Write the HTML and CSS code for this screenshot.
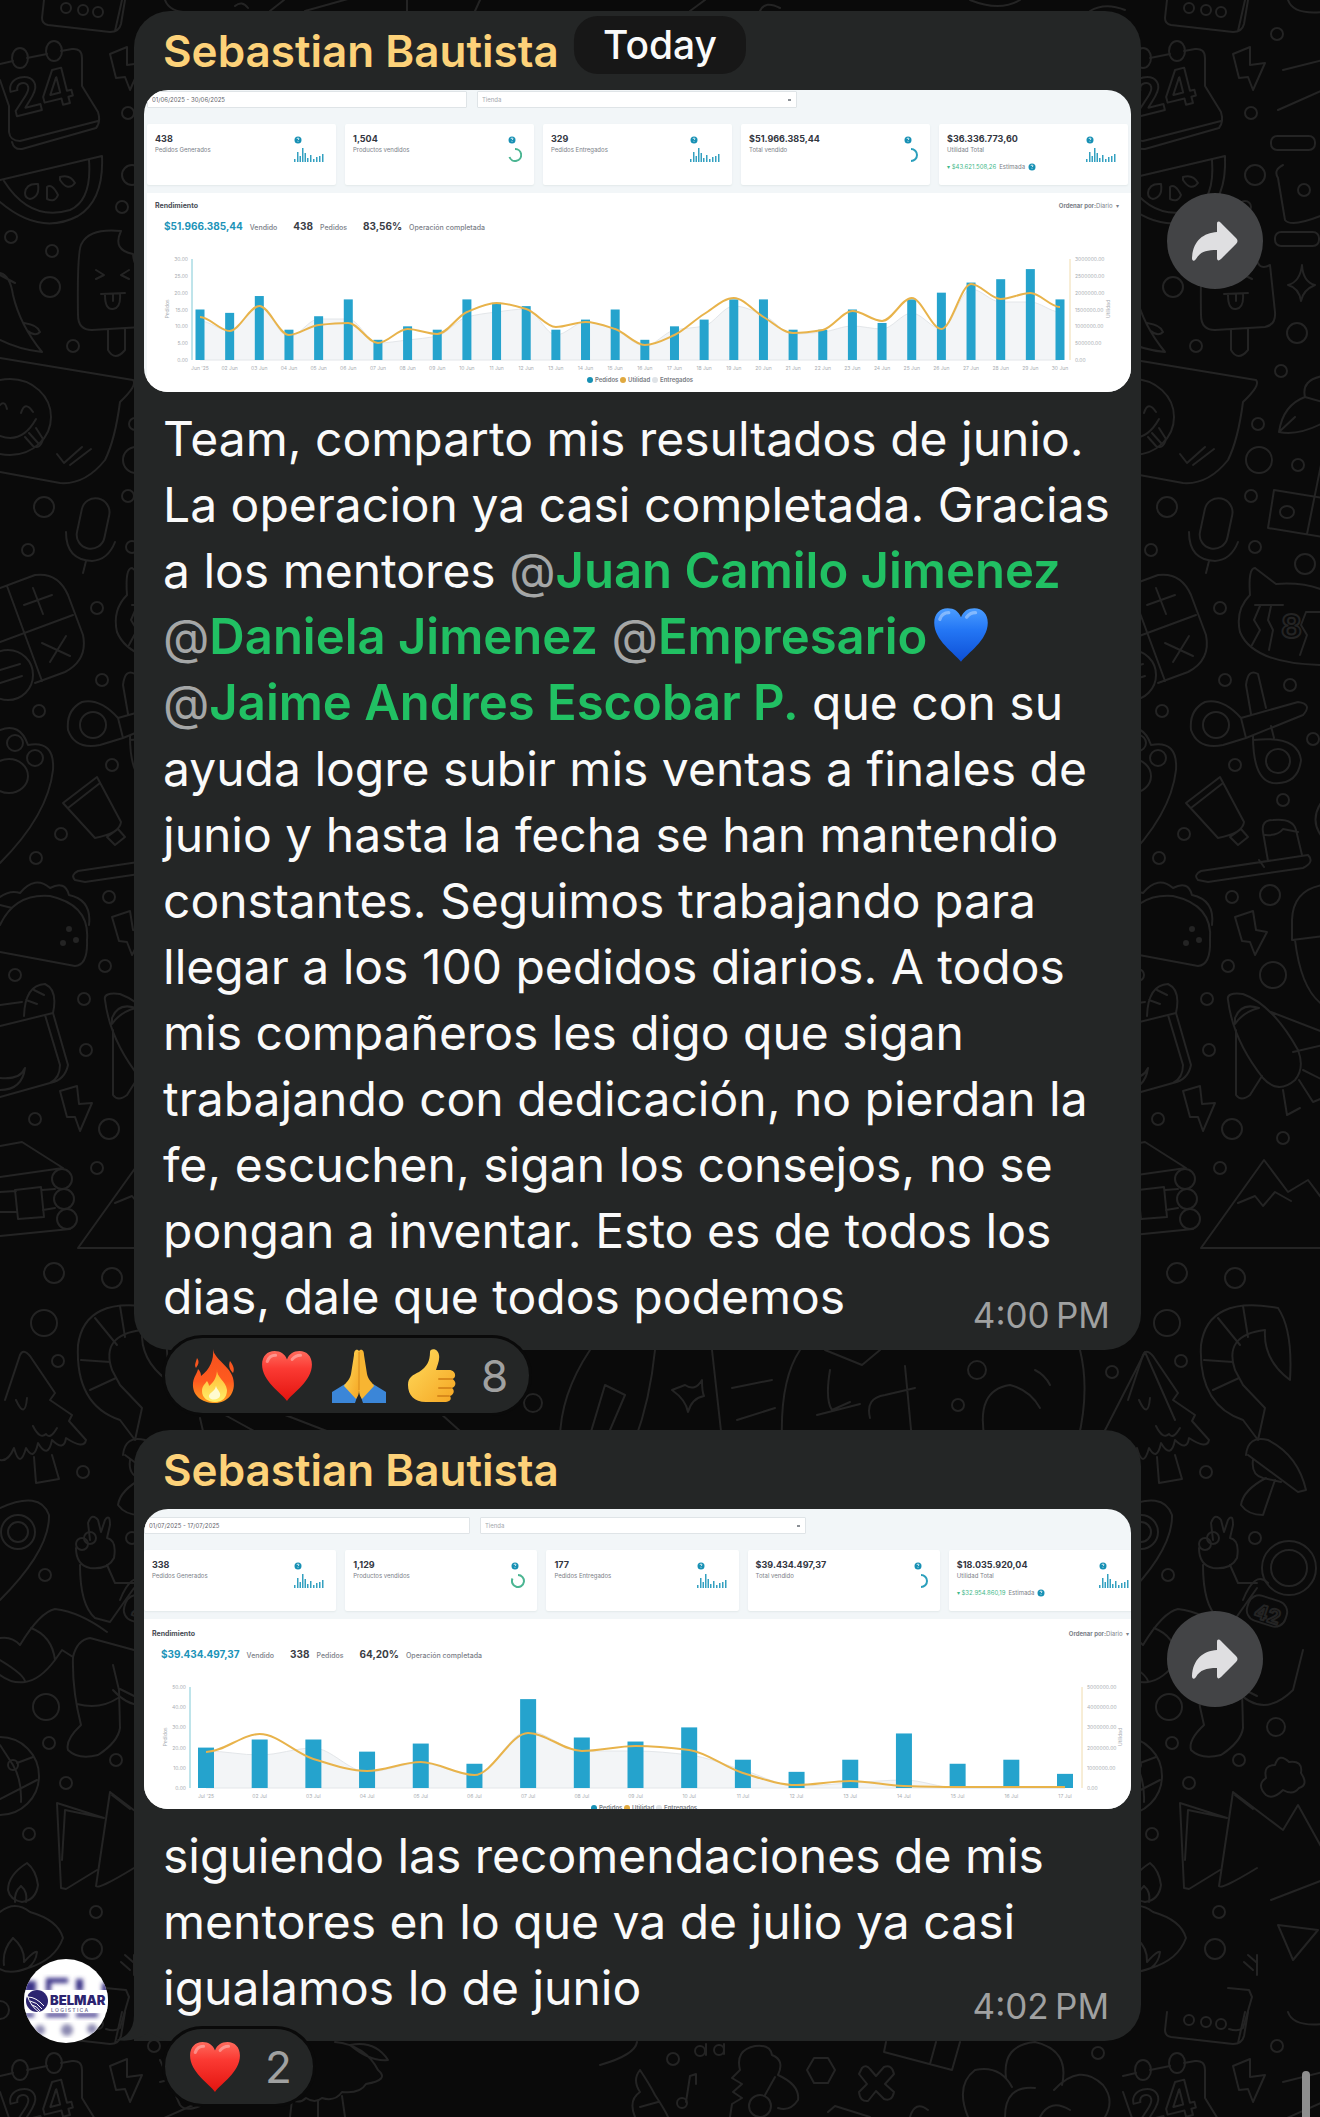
FILE: index.html
```html
<!DOCTYPE html>
<html lang="es">

<head>
<title>Chat</title>
<meta charset="utf-8" />
<meta name="viewport" content="width=device-width, initial-scale=1.0">
<link rel="stylesheet" href="styles.css">
</head>

<body>

<!-- shared drawings -->
<svg class="defs" width="0" height="0" aria-hidden="true">
  <defs>
    <linearGradient id="redFill" x1="0" y1="0" x2="0" y2="1"><stop offset="0" stop-color="#ff6a5c"/><stop offset=".35" stop-color="#fb3a33"/><stop offset="1" stop-color="#e3140f"/></linearGradient>
    <linearGradient id="blueFill" x1="0" y1="0" x2="0" y2="1"><stop offset="0" stop-color="#4b9dff"/><stop offset=".4" stop-color="#2477f5"/><stop offset="1" stop-color="#0d4fd6"/></linearGradient>
    <linearGradient id="fireFill" x1="0" y1="0" x2="0" y2="1"><stop offset="0" stop-color="#f4511e"/><stop offset=".6" stop-color="#ff5a1f"/><stop offset="1" stop-color="#ff9d1e"/></linearGradient>
    <linearGradient id="flameFill" x1="0" y1="0" x2="0" y2="1"><stop offset="0" stop-color="#ffb52e"/><stop offset="1" stop-color="#fff06a"/></linearGradient>
    <linearGradient id="skinFill" x1="0" y1="0" x2="1" y2="1"><stop offset="0" stop-color="#ffdc5e"/><stop offset="1" stop-color="#f5a623"/></linearGradient>
    <filter id="soft"><feGaussianBlur stdDeviation="2"/></filter>

    <symbol id="heart" viewBox="0 0 52 52"><path d="M26 50C20 42 2 31 2 15 2 7 7 2 14 2c6 0 10 3 12 8C28 5 32 2 38 2c7 0 12 5 12 13 0 16-18 27-24 35z"/><path d="M7 12q2-6 8-6M31 10q3-4 8-4" fill="none" stroke="#fff" stroke-opacity=".35" stroke-width="3" stroke-linecap="round"/></symbol>
    <symbol id="forward" viewBox="0 0 46 40"><path d="M25 3c0-3 2-3 4-1l15 15c2 2 2 4 0 6L29 38c-2 2-4 2-4-1v-8c-11 0-17 2-21 9-2 3-4 2-4-1C1 20 11 12 25 11z"/></symbol>
    <symbol id="minibars" viewBox="0 0 30 14"><path d="M0 11h1.5v3H0zM3 4h1.500v10H3zM5.500 8h1.500v6H5.500zM8 0h1.500v14H8zM10.500 5h1.500v9h-1.500zM13 10h1.500v4H13zM16 7h1.500v7H16zM19 11h1.500v3H19zM22 9h1.500v5H22zM25 8h1.500v6H25zM28 6h1.500v8H28z"/></symbol>
    <symbol id="info" viewBox="0 0 8 8"><circle cx="4" cy="4" r="3.500"/><path d="M3 3q0-1 1-1t1 1l-1 1.200M4 5.200v.7" fill="none" stroke="#fff" stroke-width=".8"/></symbol>

    <g id="doodles">
      <path d="M44 0L42 18Q42 24 48 25L110 32Q119 32 121 24L125 0M115 31L122 0"/>
      <circle cx="66" cy="8" r="5"/><circle cx="83" cy="10" r="5"/><circle cx="98" cy="12" r="5"/>
      <path d="M0 64L13 61M27 58L47 54M61 51L72 49Q82 48 82 58V86L98 112Q101 122 96 128L22 149Q14 150 12 142M0 80L9 106V132Q10 141 20 141L98 121"/>
      <ellipse cx="20" cy="58" rx="8" ry="10"/><ellipse cx="54" cy="51" rx="8" ry="10"/>
      <text x="14" y="117" transform="rotate(-14 14 117)" font-size="50">24</text>
      <path d="M110 54L127 47V65L142 63L130 90L125 77L116 78Z"/>
      <path d="M0 180L102 156Q104 200 78 216Q40 236 0 202M4 181Q30 222 70 210Q92 200 89 160"/>
      <path d="M25 193Q26 183 38 184Q40 197 30 199Q25 198 25 193ZM47 187Q52 183 58 195Q55 203 47 199ZM60 177Q70 174 75 183Q68 192 60 180Z"/>
      <path d="M121 231Q90 228 82 243Q77 248 78 315Q78 330 92 330L142 327Q153 325 152 312L147 265M121 231Q112 250 133 254Q134 272 147 265M108 330V350Q115 362 125 350V329M96 270L104 275L96 279M129 270L121 275L129 279M101 294L125 293M105 295Q105 310 113 309Q121 308 120 294M113 294V301"/>
      <path d="M0 273Q10 275 13 295Q20 325 42 352Q20 350 0 340M0 275L15 283M24 323Q38 325 40 332Q35 337 28 331"/>
      <path d="M0 358L133 380Q138 385 120 402Q115 440 105 460Q85 485 60 483L0 472"/>
      <ellipse cx="10" cy="417" rx="41" ry="38"/>
      <path d="M21 413Q25 400 33 412M0 405Q5 400 7 409M0 436Q22 444 36 419M25 437L33 446Q40 450 43 439L36 428M29 433L38 443"/>
      <path d="M57 454L64 463L82 447M70 465L91 449"/>
      <rect x="79" y="498" width="28" height="51" rx="14" transform="rotate(12 93 524)"/>
      <path d="M66 532Q66 560 92 561Q108 560 115 542M86 561L83 573"/>
      <path d="M0 588L35 575Q58 572 68 595L83 635Q88 660 65 672L35 683M7 586L42 681M0 642L73 615M24 605L52 595M33 588L43 614M42 643L70 656M66 636L50 662"/>
      <circle cx="8" cy="675" r="25"/><path d="M0 670L20 664M0 683L22 676"/>
      <path d="M156 432Q160 405 182 397L200 402M156 432Q175 436 200 423M156 432L172 417M182 397Q178 380 200 376"/>
      <path d="M200 498L151 490L145 528L200 537M200 455L184 534"/><ellipse cx="164" cy="512" rx="7" ry="6"/>
      <path d="M132 568L153 584Q180 582 200 590M132 568Q125 568 127 595Q112 610 117 632Q130 664 200 665M132 605H160M137 606L131 620L137 630L129 645M148 606L145 620L150 630L146 650M183 612L178 625L184 635L177 655M183 612H200"/>
      <text x="158" y="638" font-size="32">8</text>
      <path d="M118 718Q100 698 82 702Q66 710 68 730Q75 750 100 745L123 738ZM118 718L175 702Q190 704 180 715L123 738M128 714L123 685Q125 668 135 674L143 708M130 736Q130 780 150 783Q175 785 178 760Q175 735 130 740M148 726L151 738"/>
      <circle cx="93" cy="725" r="13"/><circle cx="155" cy="761" r="12"/>
      <path d="M0 730Q20 722 28 745Q55 740 53 770Q48 815 0 863"/><circle cx="15" cy="743" r="8"/><circle cx="35" cy="758" r="8"/><ellipse cx="9" cy="776" rx="19" ry="17"/>
      <path d="M63 803L97 777L121 822Q120 833 95 838ZM68 808L100 783M107 837L118 829L125 837L115 845Z"/>
      <path d="M78 871Q70 875 75 880L85 882L180 868Q192 862 185 855ZM136 860L141 867M145 861L140 832Q138 820 150 820Q170 818 173 830L179 855M142 835Q155 836 160 829L175 832"/>
      <path d="M0 925Q15 893 50 896Q90 905 87 940Q88 965 75 966L0 952M0 897Q10 890 20 893Q35 875 50 888Q65 880 69 895Q92 900 89 925M0 905L12 908"/>
      <g class="dots"><circle cx="69" cy="929" r="2"/><circle cx="63" cy="943" r="2"/><circle cx="76" cy="940" r="2"/></g>
      <path d="M112 917L130 911L133 930L144 932L132 955L127 942L119 941Z"/>
      <path d="M200 885Q170 890 169 920V940L200 936M172 940Q178 990 200 1005M200 800Q185 820 200 838"/>
      <path d="M0 1026L53 1013L68 1065Q65 1080 50 1083L0 1097M45 1015L60 1065Q60 1078 50 1083M24 1016Q25 985 45 984Q58 990 53 1013M26 1000L37 1004M34 990L44 995M0 1005L22 1002M0 1078Q20 1080 25 1068Q22 1090 0 1090"/>
      <path d="M60 1091L77 1086L79 1104L92 1103L80 1131L75 1117L67 1117Z"/>
      <path d="M105 1000Q103 992 120 994Q150 1005 175 1050Q182 1068 172 1080Q155 1095 140 1078Q110 1040 105 1000ZM112 1018Q118 1002 136 1008Q120 1012 112 1024ZM113 1030V1095Q118 1102 127 1095L139 1076M148 1012L200 1032M170 1052L200 1045M160 1090L164 1115L177 1108M176 1080L190 1102L200 1098M180 1070L200 1080"/>
      <path d="M0 1146L22 1142L63 1168L0 1177M0 1192L16 1191M42 1190L55 1189M0 1212H16M43 1210L55 1208M0 1236L70 1229M15 1190L41 1187L44 1217L18 1219Z"/>
      <circle cx="62" cy="1179" r="10"/><circle cx="64" cy="1199" r="10"/><circle cx="67" cy="1219" r="10"/>
      <path d="M200 1200L185 1180L165 1192L141 1160L78 1248H200M115 1203L132 1196L140 1206L152 1192L168 1201"/>
      <path d="M155 1308Q85 1295 78 1345Q75 1405 120 1420L135 1440L142 1408L120 1385M155 1308Q170 1330 167 1380Q140 1360 142 1330Q100 1335 112 1370L120 1385M95 1318L117 1345M120 1306L125 1337M81 1360L110 1362M90 1390L116 1378"/>
      <path d="M5 1400L20 1355Q23 1348 30 1356L55 1393L50 1400L72 1415L69 1421L86 1440Q84 1450 66 1438Q64 1452 52 1440Q48 1460 38 1443Q34 1462 26 1448Q20 1470 14 1448Q8 1462 0 1460M33 1426Q40 1440 46 1434Q50 1440 57 1428M34 1457L36 1483L59 1479L52 1455M16 1400Q25 1420 27 1398"/>
      <path d="M0 1508Q40 1490 49 1515Q50 1550 0 1600"/><circle cx="18" cy="1532" r="17"/><circle cx="18" cy="1532" r="10"/>
      <path d="M90 1540L88 1523Q92 1512 98 1520L101 1532L105 1520Q110 1513 110 1525L107 1538Q117 1540 114 1558Q108 1570 90 1568Q76 1565 76 1548M80 1565Q80 1605 95 1618L110 1622L134 1588M107 1565L115 1583H134"/>
      <circle cx="82" cy="1544" r="6"/><circle cx="90" cy="1538" r="6"/>
      <path d="M20 1645Q40 1612 55 1609Q80 1612 107 1632M0 1638Q12 1636 20 1645M31 1628Q52 1636 55 1660L62 1650L73 1657M0 1660Q25 1675 25 1682Q12 1684 0 1675M25 1682Q40 1680 55 1660M73 1657Q77 1640 90 1638L134 1650M73 1657Q72 1690 81 1725Q65 1740 68 1750Q78 1760 98 1755Q118 1742 120 1728L119 1690L113 1665M77 1704Q100 1710 118 1698M120 1689L134 1696"/>
      <circle cx="0" cy="1776" r="39"/><path d="M0 1745L13 1765Q22 1780 21 1802M17 1763L33 1757M0 1799L37 1780"/><circle cx="13" cy="1765" r="5"/>
      <path d="M104 1818L57 1803L61 1888L66 1889L97 1870M104 1818L65 1810L62 1860M110 1792L96 1886Q98 1890 134 1868M110 1792L160 1830L175 1805L200 1850M112 1795L130 1809"/>
      <path d="M27 1863Q8 1875 8 1890Q10 1900 22 1902Q36 1900 38 1885Q36 1870 27 1863ZM21 1886Q14 1892 15 1902M21 1886Q28 1892 26 1902"/>
      <path d="M0 1912Q15 1900 30 1912Q58 1920 63 1938Q55 1960 28 1968Q10 1975 0 1969M13 1938Q25 1948 24 1962Q35 1950 37 1952Q36 1962 28 1968M13 1938Q2 1950 4 1965"/>
      <path d="M105 1988L126 1990L129 1997L120 2028Q115 2032 106 2029M125 1955L133 1962M121 1962L130 1970M134 1955V1975M148 1900L200 1880M155 1925L170 1960L195 1930Z"/>
      <path d="M123 1455Q125 1435 145 1440Q175 1455 183 1490L175 1492L125 1455M143 1478Q120 1490 118 1505Q125 1515 140 1515Q145 1500 152 1480M130 1460Q128 1475 140 1478L158 1482"/>
      <path d="M143 1795Q133 1785 143 1778Q140 1765 152 1765Q156 1752 166 1762Q180 1760 178 1773Q186 1785 176 1788Q170 1796 160 1790Q150 1800 143 1795Z"/>
      <circle cx="166" cy="1568" r="27"/><circle cx="166" cy="1568" r="18"/><rect x="124" y="1598" width="40" height="26" rx="11" transform="rotate(18 144 1611)"/>
      <text x="130" y="1617" transform="rotate(18 130 1617)" font-size="20">42</text>
      <path d="M120 1600Q132 1570 145 1583M113 1690Q140 1720 170 1690L180 1650"/>
      <path d="M160 165Q150 170 155 178L162 220Q168 228 200 215M160 70L200 60M155 110L200 90"/>
      <rect x="148" y="136" width="44" height="14" rx="6"/><rect x="152" y="232" width="44" height="14" rx="6"/>
      <path d="M179 265Q180 282 192 285Q180 290 178 301Q176 288 165 285Q177 282 179 265ZM165 0Q170 15 200 12"/>
      <circle cx="128" cy="113" r="6"/><circle cx="154" cy="34" r="6"/><circle cx="122" cy="207" r="6"/><circle cx="132" cy="175" r="10"/><circle cx="181" cy="190" r="6"/><circle cx="11" cy="237" r="6"/><circle cx="52" cy="251" r="6"/><circle cx="50" cy="287" r="10"/><circle cx="73" cy="346" r="6"/><circle cx="174" cy="333" r="10"/><circle cx="158" cy="371" r="6"/><circle cx="135" cy="424" r="6"/><circle cx="136" cy="460" r="13"/><circle cx="175" cy="465" r="6"/><circle cx="128" cy="496" r="6"/><circle cx="44" cy="507" r="10"/><circle cx="132" cy="547" r="6"/><circle cx="28" cy="550" r="6"/><circle cx="182" cy="564" r="10"/><circle cx="97" cy="608" r="6"/><circle cx="102" cy="680" r="6"/><circle cx="167" cy="685" r="6"/><circle cx="39" cy="711" r="6"/><circle cx="190" cy="739" r="6"/><circle cx="112" cy="765" r="6"/><circle cx="160" cy="800" r="6"/><circle cx="61" cy="834" r="6"/><circle cx="36" cy="858" r="6"/><circle cx="109" cy="897" r="6"/><circle cx="147" cy="895" r="10"/><circle cx="105" cy="966" r="6"/><circle cx="15" cy="975" r="6"/><circle cx="150" cy="975" r="13"/><circle cx="84" cy="999" r="6"/><circle cx="86" cy="1050" r="6"/><circle cx="35" cy="1119" r="6"/><circle cx="109" cy="1129" r="10"/><circle cx="160" cy="1138" r="6"/><circle cx="97" cy="1168" r="6"/><circle cx="54" cy="1273" r="10"/><circle cx="112" cy="1278" r="10"/><circle cx="44" cy="1323" r="13"/><circle cx="58" cy="1361" r="6"/><circle cx="83" cy="1472" r="6"/><circle cx="45" cy="1575" r="6"/><circle cx="132" cy="1538" r="6"/><circle cx="46" cy="1707" r="13"/><circle cx="49" cy="1743" r="6"/><circle cx="153" cy="1727" r="9"/><circle cx="116" cy="1760" r="6"/><circle cx="66" cy="1783" r="6"/><circle cx="29" cy="1834" r="6"/><circle cx="96" cy="1912" r="6"/><circle cx="92" cy="1949" r="10"/><circle cx="0" cy="2010" r="9"/>
    </g>

    <!-- the strip that shows between and below the bubbles -->
    <g id="gapDoodles">
      <path d="M205 1440L200 1418M225 1415L270 1440M280 1413L350 1440M440 1413L470 1440M560 1440Q560 1395 590 1350M590 1435L605 1385L625 1395L610 1430M655 1350Q650 1400 635 1440M685 1385Q695 1392 702 1380Q702 1392 704 1396Q692 1398 688 1412Q686 1400 672 1390ZM712 1350L722 1440M732 1388L772 1380M737 1420L775 1408M800 1350Q780 1380 782 1440M825 1350L862 1365L880 1350M830 1370Q825 1400 832 1410L850 1402M905 1366L912 1440M817 1415L860 1404M870 1418Q865 1398 885 1395L915 1388M985 1440Q975 1390 1010 1385Q1030 1390 1040 1408M1080 1350Q1090 1390 1078 1440M1035 1370Q1045 1375 1050 1385M1100 1440L1145 1352L1175 1420"/>
      <circle cx="977" cy="1370" r="9"/><circle cx="1112" cy="1372" r="6"/><circle cx="958" cy="1405" r="6"/><circle cx="533" cy="1403" r="9"/>
      <path d="M160 2060L180 2105Q185 2112 200 2106M290 2117L292 2100Q300 2104 306 2098Q315 2104 322 2098Q335 2102 342 2092Q360 2094 366 2084Q390 2080 378 2070Q365 2045 335 2042M350 2045Q375 2040 388 2060Q370 2062 350 2045M318 2100V2117M342 2096L345 2117"/>
      <path d="M600 2065Q635 2055 637 2042M640 2070Q650 2085 655 2095Q665 2110 668 2117M640 2070Q632 2080 640 2092Q628 2100 635 2117M640 2107L658 2102M706 2044V2055M724 2044V2054M690 2076L696 2074V2084M690 2076L686 2102M740 2070Q735 2050 755 2046Q770 2044 772 2055Q785 2060 778 2075Q800 2085 798 2100Q790 2112 778 2108M740 2070L732 2078L742 2084L733 2092L742 2098L732 2104L730 2117M775 2077L765 2095"/>
      <circle cx="673" cy="2059" r="6"/><circle cx="700" cy="2051" r="5"/><circle cx="719" cy="2050" r="5"/><circle cx="682" cy="2103" r="5"/><circle cx="760" cy="2106" r="11"/>
      <path d="M814 2058H828L835 2070L828 2083H814L807 2070ZM862 2068Q866 2064 870 2069L876 2076L884 2067Q892 2064 894 2074L885 2084L894 2092Q892 2102 884 2099L876 2091L868 2101Q860 2102 859 2092L867 2084L859 2074ZM886 2042L884 2052L952 2070L960 2042M930 2064L936 2042M1012 2087Q1000 2065 975 2070Q955 2085 968 2117M1006 2078Q1002 2045 1035 2042Q1070 2050 1062 2085M1054 2090Q1080 2062 1103 2085Q1115 2100 1105 2117M1005 2117Q1005 2085 1035 2088M1040 2117Q1050 2098 1070 2110M828 2112L835 2106L870 2117M910 2117Q915 2100 928 2110"/>
      <circle cx="1098" cy="2053" r="6"/>
      <path d="M270 11L284 0M305 11L380 -10M235 6Q242 0 248 8M407 11V0M475 11L480 0M690 11L705 0M760 11Q765 0 780 8M970 0Q1000 12 1020 0M1090 11Q1105 2 1125 10"/>
    </g>
  </defs>
</svg>

<main class="chat">
  <svg class="wallpaper" aria-hidden="true">
    <use href="#doodles"/>
    <use href="#doodles" x="1123"/>
    <use href="#doodles" y="2012"/>
    <use href="#doodles" x="1123" y="2012"/>
    <use href="#gapDoodles"/>
  </svg>

  <div class="day">Today</div>

  <article class="message">
    <div class="bubble">
      <h2 class="author">Sebastian Bautista</h2>
      <div class="media">
        <section class="shot shot-june">
          <div class="filters">
            <input class="field" type="text" aria-label="Fechas" value="01/06/2025 - 30/06/2025">
            <select class="field store" aria-label="Tienda"><option>Tienda</option></select>
          </div>
          <div class="cards">
            <div class="card"><div><b>438</b><span>Pedidos Generados</span></div><div class="icons"><svg class="info"><use href="#info"/></svg><svg class="bars"><use href="#minibars"/></svg></div></div>
            <div class="card"><div><b>1,504</b><span>Productos vendidos</span></div><div class="icons"><svg class="info"><use href="#info"/></svg><svg class="ring" viewBox="0 0 14 14"><path d="M7 1a6 6 0 1 1-5.500 8"/></svg></div></div>
            <div class="card"><div><b>329</b><span>Pedidos Entregados</span></div><div class="icons"><svg class="info"><use href="#info"/></svg><svg class="bars"><use href="#minibars"/></svg></div></div>
            <div class="card"><div><b>$51.966.385,44</b><span>Total vendido</span></div><div class="icons"><svg class="info"><use href="#info"/></svg><svg class="ring half" viewBox="0 0 14 14"><path d="M7 1a6 6 0 0 1 0 12"/></svg></div></div>
            <div class="card"><div><b>$36.336.773,60</b><span>Utilidad Total</span><span class="estimate"><em>▾ $43.621.508,26</em> Estimada <svg class="info"><use href="#info"/></svg></span></div><div class="icons"><svg class="info"><use href="#info"/></svg><svg class="bars"><use href="#minibars"/></svg></div></div>
          </div>
          <div class="panel">
            <div class="panel-head"><strong>Rendimiento</strong><span class="sort"><b>Ordenar por:</b>Diario&nbsp; ▾</span></div>
            <div class="stats"><span><b class="money">$51.966.385,44</b> Vendido</span><span><b>438</b> Pedidos</span><span><b>83,56%</b> Operación completada</span></div>
            <svg class="chart" id="june" viewBox="0 0 984 154"></svg>
          </div>
        </section>
        <button class="forward" aria-label="Reenviar"><svg><use href="#forward"/></svg></button>
      </div>
      <div class="text">
        <p>Team, comparto mis resultados de junio.<br>
        La operacion ya casi completada. Gracias<br>
        a los mentores <a href="#juan">@<b>Juan Camilo Jimenez</b></a><br>
        <a href="#daniela">@<b>Daniela Jimenez</b></a> <a href="#empresario">@<b>Empresario</b></a><svg class="emoji blue" role="img" aria-label="corazón azul"><use href="#heart"/></svg><br>
        <a href="#jaime">@<b>Jaime Andres Escobar P.</b></a> que con su<br>
        ayuda logre subir mis ventas a finales de<br>
        junio y hasta la fecha se han mantendio<br>
        constantes. Seguimos trabajando para<br>
        llegar a los 100 pedidos diarios. A todos<br>
        mis compañeros les digo que sigan<br>
        trabajando con dedicación, no pierdan la<br>
        fe, escuchen, sigan los consejos, no se<br>
        pongan a inventar. Esto es de todos los<br>
        dias, dale que todos podemos</p>
        <time>4:00&#8201;PM</time>
      </div>
    </div>
    <button class="reactions" aria-label="8 reacciones">
      <svg viewBox="0 0 54 54"><path fill="url(#fireFill)" d="M25 0c1 10 17 17 20 29 4 15-6 25-18 25C13 54 4 46 5 34c1-7 4-9 5-14 2 2 3 4 3 7C22 20 26 11 25 0zM9 9c3 4 1 7-1 10-2-3 0-6 1-10zM42 12c3 4 5 8 3 12-3-3-5-7-3-12z"/><path fill="url(#flameFill)" d="M29 20c-1 8 9 12 10 21 0 8-5 12-12 12s-13-4-13-11c0-5 3-7 5-10 1 2 2 3 2 5 5-4 8-9 8-17z"/><path fill="#fffbd0" d="M28 37c1 4 5 6 4 10-1 4-9 5-11 1-1-4 6-5 7-11z"/></svg>
      <svg class="red"><use href="#heart"/></svg>
      <svg viewBox="0 0 54 54"><path fill="#3b86d8" d="M0 54V43l13-8 12 13-2 6zM54 54V43l-13-8-12 13 2 6z"/><path fill="url(#skinFill)" d="M26 1c-3-1-4 2-4 5l-3 19c-1 6-6 9-7 12l12 13c2-3 3-5 3-9V2z"/><path fill="#f7b532" d="M28 1c3-1 4 2 4 5l3 19c1 6 6 9 7 12L30 50c-2-3-3-5-3-9V2z"/><path d="M27 3v38" stroke="#d98a1b" stroke-width="1"/></svg>
      <svg viewBox="0 0 54 54"><path fill="url(#skinFill)" d="M26 3c0-4 8-4 9 3 1 5-2 11-3 15h13c7 0 8 8 3 9 5 2 4 8 0 9 3 2 2 7-2 8 2 3 0 6-4 6H22C10 53 4 46 4 36c0-8 5-10 11-13 8-5 11-11 11-20z"/><path d="M35 30h13M35 39h12M34 47h11" fill="none" stroke="#d98a1b" stroke-width="2" stroke-linecap="round"/></svg>
      <span>8</span>
    </button>
  </article>

  <article class="message">
    <svg class="avatar" viewBox="0 0 84 84" role="img" aria-label="Belmar Logística">
      <clipPath id="round"><circle cx="42" cy="42" r="42"/></clipPath>
      <g clip-path="url(#round)">
        <path fill="#fff" d="M0 0h84v84H0z"/>
        <path fill="#3b3187" filter="url(#soft)" d="M0 22h12v12H0zM22 19h22v5H27v9h-5zM52 20h7v12h-7zM78 24h6v12h-6zM22 54h22v4H22zM52 54h22v4H52zM0 54h10v4H0z"/>
        <g fill="#8b89b0" filter="url(#soft)"><circle cx="16" cy="71" r="5"/><circle cx="43" cy="71" r="6"/><circle cx="68" cy="70" r="5"/></g>
        <path fill="#fff" d="M0 31h84v23H0z"/>
        <circle cx="13" cy="42" r="11" fill="#2c2470"/>
        <path fill="none" stroke="#fff" d="M4 38q8 0 16 9M6 42q7 1 12 8M8 46q5 1 8 6M3 36q4 12 12 17"/>
        <text x="26" y="46" font-size="13" font-weight="900" fill="#2c2470">BELMAR</text>
        <text x="27" y="53" font-size="5" fill="#77749a" font-weight="600">L O G Í S T I C A</text>
      </g>
    </svg>
    <div class="bubble tailed">
      <svg class="tail" viewBox="0 0 50 40" aria-hidden="true"><path d="M18 0V14Q18 34 0 39Q20 42 32 31L50 40V0Z"/></svg>
      <h2 class="author">Sebastian Bautista</h2>
      <div class="media">
        <section class="shot shot-july">
          <div class="filters">
            <input class="field" type="text" aria-label="Fechas" value="01/07/2025 - 17/07/2025">
            <select class="field store" aria-label="Tienda"><option>Tienda</option></select>
          </div>
          <div class="cards">
            <div class="card"><div><b>338</b><span>Pedidos Generados</span></div><div class="icons"><svg class="info"><use href="#info"/></svg><svg class="bars"><use href="#minibars"/></svg></div></div>
            <div class="card"><div><b>1,129</b><span>Productos vendidos</span></div><div class="icons"><svg class="info"><use href="#info"/></svg><svg class="ring" viewBox="0 0 14 14"><path d="M7 1a6 6 0 1 1-5.500 3.500"/></svg></div></div>
            <div class="card"><div><b>177</b><span>Pedidos Entregados</span></div><div class="icons"><svg class="info"><use href="#info"/></svg><svg class="bars"><use href="#minibars"/></svg></div></div>
            <div class="card"><div><b>$39.434.497,37</b><span>Total vendido</span></div><div class="icons"><svg class="info"><use href="#info"/></svg><svg class="ring half" viewBox="0 0 14 14"><path d="M7 1a6 6 0 0 1 0 12"/></svg></div></div>
            <div class="card"><div><b>$18.035.920,04</b><span>Utilidad Total</span><span class="estimate"><em>▾ $32.954.860,19</em> Estimada <svg class="info"><use href="#info"/></svg></span></div><div class="icons"><svg class="info"><use href="#info"/></svg><svg class="bars"><use href="#minibars"/></svg></div></div>
          </div>
          <div class="panel">
            <div class="panel-head"><strong>Rendimiento</strong><span class="sort"><b>Ordenar por:</b>Diario&nbsp; ▾</span></div>
            <div class="stats"><span><b class="money">$39.434.497,37</b> Vendido</span><span><b>338</b> Pedidos</span><span><b>64,20%</b> Operación completada</span></div>
            <svg class="chart" id="july" viewBox="0 0 997 154"></svg>
          </div>
        </section>
        <button class="forward" aria-label="Reenviar"><svg><use href="#forward"/></svg></button>
      </div>
      <div class="text">
        <p>siguiendo las recomendaciones de mis<br>
        mentores en lo que va de julio ya casi<br>
        igualamos lo de junio</p>
        <time>4:02&#8201;PM</time>
      </div>
    </div>
    <button class="reactions" aria-label="2 reacciones">
      <svg class="red"><use href="#heart"/></svg>
      <span>2</span>
    </button>
  </article>

  <div class="scrollbar"></div>
</main>

<script src="charts.js"></script>
</body>

</html>
```
FILE: styles.css
```css
body {
  margin: 0;
  background-color: #0a0a0a;
  color: #fafafa;
  font-family: Inter, "Liberation Sans", sans-serif;
}

button {
  border: 0;
  font-family: inherit;
}

.defs {
  position: absolute;
}

.chat {
  position: relative;
  overflow: hidden;
  display: flex;
  flex-direction: column;
  gap: 14px;
  padding: 11px 179px 10px 134px;
}

.wallpaper {
  position: absolute;
  left: 0;
  top: 0;
  width: 100%;
  height: 100%;
  fill: none;
  stroke: #242424;
  stroke-width: 2;
  stroke-linejoin: round;
  stroke-linecap: round;
  font-weight: 700;
}

.dots {
  fill: #242424;
}

.day {
  position: absolute;
  z-index: 2;
  top: 16px;
  left: 50%;
  transform: translateX(-50%);
  padding: 0 29px;
  border-radius: 24px;
  background-color: #171717;
  font-size: 39px;
  font-weight: 500;
  line-height: 58px;
}

/* message */
.message {
  position: relative;
}

.bubble {
  position: relative;
  padding: 0 10px 20px;
  border-radius: 36px;
  background-color: #242626;
}

.bubble.tailed {
  border-bottom-left-radius: 0;
}

.tail {
  position: absolute;
  left: -18px;
  bottom: 0;
  width: 50px;
  height: 40px;
  fill: #242626;
}

.author {
  margin: 0;
  padding: 2px 19px 0;
  color: #fdd279;
  font-size: 44px;
  font-weight: 600;
  line-height: 77px;
}

.media {
  display: flex;
  align-items: center;
  gap: 36px;
  margin-right: -132px;
}

.forward {
  display: flex;
  align-items: center;
  justify-content: center;
  width: 96px;
  height: 96px;
  padding: 0;
  border-radius: 50%;
  background-color: #434446;
}

.forward svg {
  width: 46px;
  height: 40px;
  fill: #dfdfe1;
}

.text {
  display: grid;
  margin-top: 14px;
  padding: 0 22px 0 19px;
}

.text p,
.text time {
  grid-area: 1 / 1;
}

.text p {
  margin: 0;
  font-size: 48px;
  line-height: 66px;
  white-space: nowrap;
}

.text a {
  color: #a5a7a7;
  text-decoration: none;
}

.text a b {
  color: #21c063;
  font-size: 49px;
  font-weight: 600;
  line-height: 60px;
}

.text time {
  align-self: end;
  justify-self: end;
  color: #a0a1a1;
  font-size: 35px;
  line-height: 30px;
}

.emoji {
  width: 64px;
  height: 58px;
  margin: 0 2px;
  vertical-align: -10px;
}

.blue {
  fill: url(#blueFill);
}

.red {
  fill: url(#redFill);
}

.reactions {
  position: relative;
  display: flex;
  align-items: center;
  gap: 18px;
  height: 81px;
  margin: -15px 0 0 28px;
  padding: 0 21px 0 23px;
  border: 3px solid #0a0a0a;
  border-radius: 41px;
  background-color: #242626;
  color: #a0a1a1;
  font-size: 44px;
}

.reactions svg {
  width: 54px;
  height: 54px;
}

.reactions span {
  padding-left: 5px;
}

.avatar {
  position: absolute;
  left: -110px;
  bottom: 64px;
  width: 84px;
  height: 84px;
}

.scrollbar {
  position: absolute;
  right: 10px;
  bottom: 0;
  width: 8px;
  height: 46px;
  border-radius: 4px 4px 0 0;
  background-color: #8e8e8e;
}

/* dashboard captures */
.shot {
  flex: 1;
  min-width: 0;
  box-sizing: border-box;
  overflow: hidden;
  border-radius: 24px;
  background-color: #f2f6f8;
  color: #7b8088;
  font-size: 7px;
}

.shot-june {
  height: 302px;
  padding: 1px 0 0 3px;
}

.shot-june .cards {
  margin-right: 3px;
}

.shot-july {
  height: 300px;
  padding-top: 8px;
}

.shot-july > div {
  width: 997px;
}

.filters {
  display: flex;
  gap: 10px;
}

.field {
  box-sizing: border-box;
  width: 320px;
  height: 17px;
  padding: 0 4px;
  border: 1px solid #dfe4e7;
  border-radius: 1px;
  background-color: #fff;
  color: #5f646b;
  font-family: inherit;
  font-size: 6px;
}

.shot-july .field {
  width: 326px;
}

.store {
  appearance: none;
  background-image: linear-gradient(#8b9096, #8b9096);
  background-position: right 5px center;
  background-repeat: no-repeat;
  background-size: 3px 2px;
  color: #a3a8ad;
}

.cards {
  display: grid;
  grid-template-columns: repeat(5, 1fr);
  gap: 9px;
  margin: 16px 0 8px;
}

.card {
  display: flex;
  justify-content: space-between;
  box-sizing: border-box;
  height: 61px;
  padding: 9px 12px 0 8px;
  border-radius: 2px;
  background-color: #fff;
  box-shadow: 0 1px 2px #e2e8ea;
}

.card b {
  display: block;
  color: #33363f;
  font-size: 9px;
  line-height: 12px;
}

.card span {
  display: block;
  font-size: 6px;
  line-height: 10px;
}

.card .estimate {
  display: flex;
  gap: 3px;
  align-items: center;
  margin-top: 7px;
}

.estimate em {
  color: #3fb98a;
  font-style: normal;
}

.icons {
  display: flex;
  flex-direction: column;
  gap: 4px;
  padding-top: 3px;
}

.info {
  width: 8px;
  height: 8px;
  fill: #1790b4;
}

.bars {
  width: 30px;
  height: 14px;
  fill: #33a0c0;
}

.ring {
  width: 14px;
  height: 14px;
  fill: none;
  stroke: #4bb592;
  stroke-width: 2;
}

.half {
  stroke: #2b9fbc;
}

.panel {
  padding-top: 7px;
  background-color: #fff;
}

.shot-july .panel {
  padding-top: 9px;
}

.panel-head {
  display: flex;
  justify-content: space-between;
  padding: 0 12px 0 8px;
  line-height: 12px;
}

.panel-head strong {
  color: #4a4d55;
}

.sort {
  font-size: 6px;
}

.stats {
  display: flex;
  gap: 16px;
  margin-top: 8px;
  padding: 0 17px;
  font-size: 7px;
  font-weight: 500;
  line-height: 12px;
}

.stats span {
  display: flex;
  align-items: baseline;
  gap: 7px;
}

.stats b {
  color: #3a3d45;
  font-size: 10px;
}

.stats .money {
  color: #1c93b8;
}

.chart {
  display: block;
  width: 100%;
  margin-top: 5px;
  fill: #a9adb2;
  font-size: 5px;
}

.chart .bar {
  fill: #25a3cd;
}

.chart .area {
  fill: #f3f5f7;
  stroke: #e3e6e9;
}

.chart .line {
  fill: none;
  stroke: #e8b34b;
  stroke-width: 2;
}

.chart .legend {
  font-size: 6px;
  font-weight: 600;
  fill: #777b82;
}
```
FILE: charts.js
```js
var BASE = 121;

// Smooth path through the points, flat at every local peak
function curve(points) {
  var slopes = points.map(function (p, i) {
    if (i == 0 || i == points.length - 1) return 0;
    var a = (p[1] - points[i - 1][1]) / (p[0] - points[i - 1][0]);
    var b = (points[i + 1][1] - p[1]) / (points[i + 1][0] - p[0]);
    return a * b <= 0 ? 0 : 2 * a * b / (a + b);
  });
  var d = "M" + points[0];
  for (var i = 1; i < points.length; i++) {
    var p = points[i - 1], q = points[i], t = (q[0] - p[0]) / 3;
    d += "C" + [p[0] + t, p[1] + slopes[i - 1] * t, q[0] - t, q[1] - slopes[i] * t, q[0], q[1]];
  }
  return d;
}

function drawChart(id, c) {
  var step = (c.last - c.first) / (c.orders.length - 1);
  var x = function (i) { return c.first + i * step; };
  var toPoints = function (list) {
    return list.map(function (up, i) { return [x(i), BASE - up]; });
  };
  var html = "";

  html += '<path class="area" d="' + curve(toPoints(c.delivered)) + "L" + c.last + "," + BASE + "L" + c.first + "," + BASE + 'Z"/>';
  c.orders.forEach(function (n, i) {
    var h = n * 101 / c.max;
    html += '<rect class="bar" x="' + (x(i) - c.bar / 2) + '" y="' + (BASE - h) + '" width="' + c.bar + '" height="' + h + '"/>';
    var day = i == 0 ? c.month + " '25" : (i < 9 ? "0" : "") + (i + 1) + " " + c.month;
    html += '<text x="' + x(i) + '" y="131" text-anchor="middle">' + day + "</text>";
  });
  html += '<path class="line" d="' + curve(toPoints(c.profit)) + '"/>';

  // axes
  html += '<path d="M' + c.left + " 20V" + BASE + '" stroke="#7fc9d6"/>';
  html += '<path d="M' + c.right + " 20V" + BASE + '" stroke="#f0dcae"/>';
  for (var v = 0; v <= c.max; v += c.tick) {
    var y = BASE + 2 - v * 101 / c.max;
    html += '<text x="' + (c.left - 4) + '" y="' + y + '" text-anchor="end">' + v.toFixed(2) + "</text>";
    html += '<text x="' + (c.right + 5) + '" y="' + y + '">' + (v * c.scale).toFixed(2) + "</text>";
  }
  html += '<text transform="translate(' + (c.left - 23) + ' 70) rotate(-90)" text-anchor="middle">Pedidos</text>';
  html += '<text transform="translate(' + (c.right + 40) + ' 70) rotate(-90)" text-anchor="middle">Utilidad</text>';

  [["#1790b4", "Pedidos", 0], ["#e0a93f", "Utilidad", 33], ["#dfe3e7", "Entregados", 65]].forEach(function (l) {
    html += '<circle cx="' + (c.legend + l[2]) + '" cy="141" r="3" fill="' + l[0] + '"/>';
    html += '<text class="legend" x="' + (c.legend + l[2] + 5) + '" y="143">' + l[1] + "</text>";
  });
  document.getElementById(id).innerHTML = html;
}

drawChart("june", {
  month: "Jun", max: 30, tick: 5, scale: 100000, bar: 9,
  left: 45, right: 923, first: 53, last: 913, legend: 443,
  orders: [15, 14, 19, 9, 13, 18, 6, 10, 9, 18, 17, 16, 9, 12, 15, 6, 10, 12, 18, 18, 9, 9, 15, 11, 18, 20, 23, 24, 27, 18],
  profit: [43, 29, 54, 25, 35, 37, 17, 31, 26, 48, 57, 51, 33, 38, 31, 15, 25, 46, 62, 43, 27, 30, 49, 39, 62, 31, 76, 61, 67, 53],
  delivered: [39, 29, 53, 23, 41, 41, 17, 20, 24, 43, 48, 51, 25, 38, 30, 14, 30, 34, 54, 45, 26, 28, 34, 31, 47, 31, 71, 58, 58, 48]
});

drawChart("july", {
  month: "Jul", max: 50, tick: 10, scale: 100000, bar: 16,
  left: 46, right: 938, first: 62, last: 921, legend: 450,
  orders: [20, 24, 24, 18, 22, 12, 44, 25, 23, 30, 14, 8, 14, 27, 12, 14, 7],
  profit: [36, 54, 29, 17, 26, 13, 55, 37, 42, 38, 15, 3, 7, 2, 1, 1, 1],
  delivered: [37, 33, 40, 16, 25, 13, 57, 37, 37, 33, 18, 2, 5, 8, 0, 0, 0]
});
```
